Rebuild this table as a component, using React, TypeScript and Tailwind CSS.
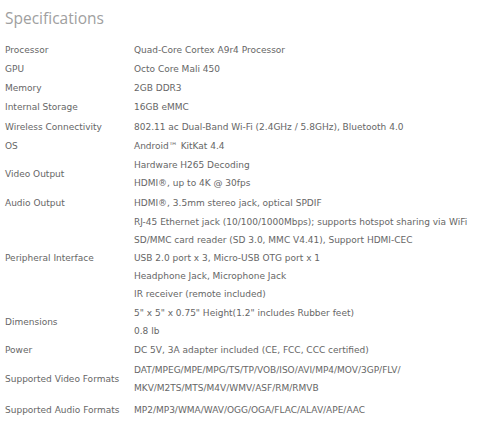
const specs: { label: string; values: string[] }[] = [
  { label: "Processor", values: ["Quad-Core Cortex A9r4 Processor"] },
  { label: "GPU", values: ["Octo Core Mali 450"] },
  { label: "Memory", values: ["2GB DDR3"] },
  { label: "Internal Storage", values: ["16GB eMMC"] },
  { label: "Wireless Connectivity", values: ["802.11 ac Dual-Band Wi-Fi (2.4GHz / 5.8GHz), Bluetooth 4.0"] },
  { label: "OS", values: ["Android™ KitKat 4.4"] },
  { label: "Video Output", values: ["Hardware H265 Decoding", "HDMI®, up to 4K @ 30fps"] },
  { label: "Audio Output", values: ["HDMI®, 3.5mm stereo jack, optical SPDIF"] },
  {
    label: "Peripheral Interface",
    values: [
      "RJ-45 Ethernet jack (10/100/1000Mbps); supports hotspot sharing via WiFi",
      "SD/MMC card reader (SD 3.0, MMC V4.41), Support HDMI-CEC",
      "USB 2.0 port x 3, Micro-USB OTG port x 1",
      "Headphone Jack, Microphone Jack",
      "IR receiver (remote included)",
    ],
  },
  { label: "Dimensions", values: ["5\" x 5\" x 0.75\" Height(1.2\" includes Rubber feet)", "0.8 lb"] },
  { label: "Power", values: ["DC 5V, 3A adapter included (CE, FCC, CCC certified)"] },
  {
    label: "Supported Video Formats",
    values: ["DAT/MPEG/MPE/MPG/TS/TP/VOB/ISO/AVI/MP4/MOV/3GP/FLV/", "MKV/M2TS/MTS/M4V/WMV/ASF/RM/RMVB"],
  },
  { label: "Supported Audio Formats", values: ["MP2/MP3/WMA/WAV/OGG/OGA/FLAC/ALAV/APE/AAC"] },
]

export default function App() {
  return (
    <div className="w-[500px] h-[433px] bg-white px-[5px] overflow-hidden">
      <h2 className="pt-[6px] text-[15.5px] leading-[24px] text-[#a0a0a0] font-['Open_Sans',sans-serif] font-normal">
        Specifications
      </h2>
      <div className="mt-[10px] font-['DejaVu_Sans',Verdana,sans-serif] text-[9px] text-[#666]">
        {specs.map((row, i) => (
          <div
            key={row.label}
            className={
              i === specs.length - 1
                ? "grid grid-cols-[129px_1fr] py-[0.65px] mt-[3.4px]"
                : "grid grid-cols-[129px_1fr] py-[0.65px]"
            }
          >
            <div className="flex items-center leading-[18px]">{row.label}</div>
            <div>
              {row.values.map((v) => (
                <div key={v} className="leading-[18px] whitespace-nowrap">
                  {v}
                </div>
              ))}
            </div>
          </div>
        ))}
      </div>
    </div>
  )
}
